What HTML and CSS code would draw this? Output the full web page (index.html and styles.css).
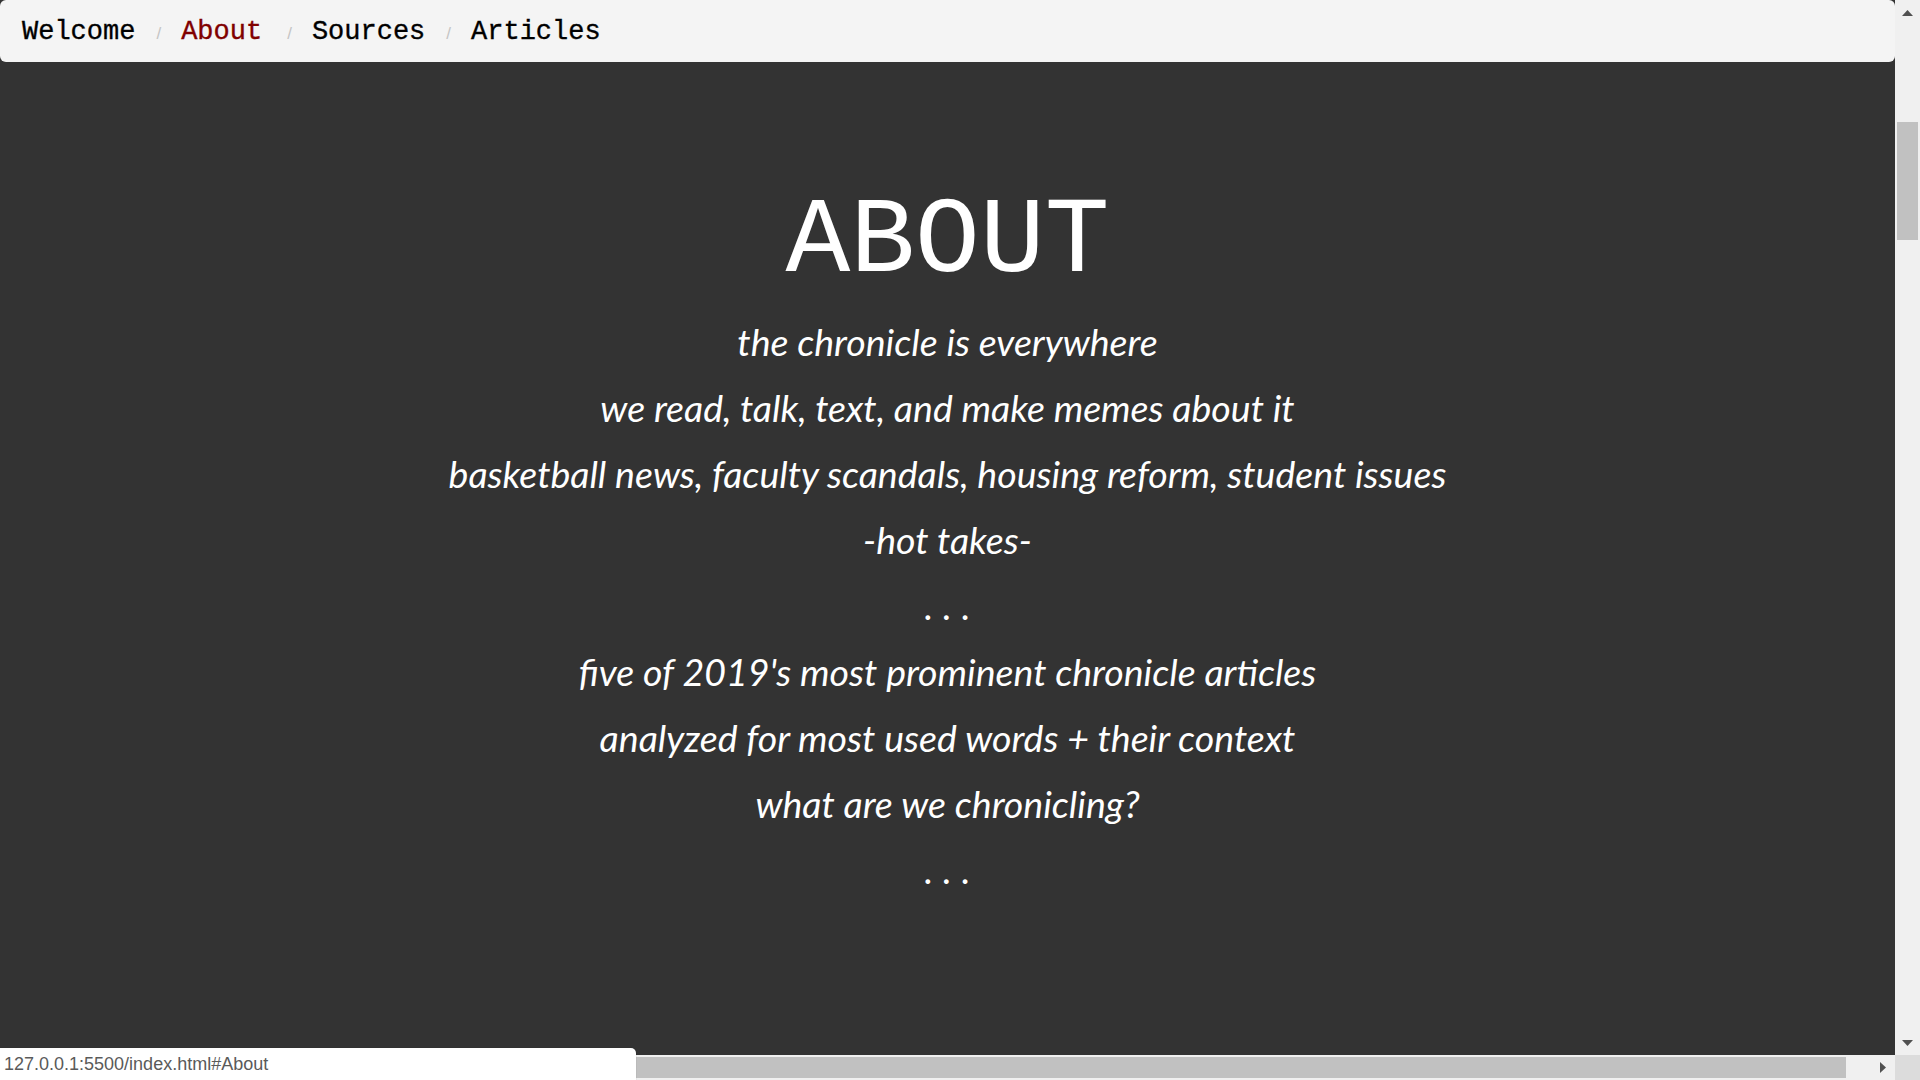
FILE: index.html
```html
<!DOCTYPE html>
<html lang="en">
<head>
<meta charset="utf-8">
<title>About</title>
<link rel="stylesheet" href="styles.css">
</head>
<body>
<div class="window">
  <div class="row-main">
    <div class="viewport">
      <nav class="crumbs">
        <a class="crumb" href="#Welcome">Welcome</a>
        <span class="sep">/</span>
        <a class="crumb active" href="#About">About</a>
        <span class="sep">/</span>
        <a class="crumb" href="#Sources">Sources</a>
        <span class="sep">/</span>
        <a class="crumb" href="#Articles">Articles</a>
      </nav>
      <section class="about" id="About">
        <h1 class="title">ABOUT</h1>
        <p class="line">the chronicle is everywhere</p>
        <p class="line">we read, talk, text, and make memes about it</p>
        <p class="line">basketball news, faculty scandals, housing reform, student issues</p>
        <p class="line">-hot takes-</p>
        <p class="line dots">. . .</p>
        <p class="line">five of 2019's most prominent chronicle articles</p>
        <p class="line">analyzed for most used words + their context</p>
        <p class="line">what are we chronicling?</p>
        <p class="line dots">. . .</p>
      </section>
    </div>
    <div class="vscroll">
      <div class="sb-btn">
        <svg width="11" height="6" viewBox="0 0 11 6"><polygon points="0,6 5.5,0 11,6" fill="#505050"/></svg>
      </div>
      <div class="sb-track-v"><div class="thumb-v"></div></div>
      <div class="sb-btn">
        <svg width="11" height="6" viewBox="0 0 11 6"><polygon points="0,0 11,0 5.5,6" fill="#505050"/></svg>
      </div>
    </div>
  </div>
  <div class="row-h">
    <div class="hscroll">
      <div class="sb-btn">
        <svg width="6" height="11" viewBox="0 0 6 11"><polygon points="6,0 6,11 0,5.5" fill="#505050"/></svg>
      </div>
      <div class="sb-track-h"><div class="thumb-h"></div></div>
      <div class="sb-btn">
        <svg width="6" height="11" viewBox="0 0 6 11"><polygon points="0,0 6,5.5 0,11" fill="#505050"/></svg>
      </div>
    </div>
    <div class="corner"></div>
  </div>
  <div class="status">127.0.0.1:5500/index.html#About</div>
</div>
</body>
</html>
```

FILE: styles.css
```css
* { box-sizing: border-box; }
html, body { margin: 0; padding: 0; }
body { width: 1920px; height: 1080px; overflow: hidden; background: #333333; }

.window {
  position: relative;
  width: 1920px;
  height: 1080px;
  display: flex;
  flex-direction: column;
}

.row-main { flex: 1; display: flex; min-height: 0; }
.viewport { flex: 1; background: #333333; overflow: hidden; }

.crumbs {
  display: flex;
  align-items: baseline;
  height: 62px;
  padding: 17px 0 0 22px;
  background: #f4f4f4;
  border-radius: 6px;
  font-family: "Liberation Mono", "Courier New", monospace;
  font-size: 27px;
  line-height: 31px;
}
.crumb { color: #000; text-decoration: none; -webkit-text-stroke: 0.35px currentColor; }
.crumb.active { color: #800000; margin-right: 4px; }
.sep {
  font-family: "Liberation Sans", Arial, sans-serif;
  font-size: 17px;
  color: #c4c4c4;
  margin: 0 20px 0 21px;
}

.about { text-align: center; color: #fff; }
.title {
  margin: 126px 0 13px;
  font-family: "Liberation Mono", "Courier New", monospace;
  font-weight: normal;
  font-size: 108px;
  line-height: 108px;
}
.line {
  margin: 0;
  font-family: Lato, "Open Sans", sans-serif;
  font-style: italic;
  font-size: 37.5px;
  line-height: 66px;
}
.dots { word-spacing: 1px; }

.vscroll {
  width: 25px;
  background: #f0f0f0;
  display: flex;
  flex-direction: column;
}
.sb-btn {
  width: 25px;
  height: 25px;
  flex: none;
  display: flex;
  align-items: center;
  justify-content: center;
}
.sb-btn svg { display: block; }
.sb-track-v { flex: 1; }
.thumb-v {
  margin: 97px 2px 0;
  height: 118px;
  background: #c1c1c1;
}

.row-h { height: 25px; display: flex; flex: none; }
.hscroll { flex: 1; display: flex; background: #f0f0f0; }
.sb-track-h { flex: 1; display: flex; }
.thumb-h {
  flex: 1;
  margin: 2px 24px 2px 475px;
  background: #c1c1c1;
}
.corner { width: 25px; background: #dcdcdc; }

.status {
  position: absolute;
  left: 0;
  bottom: 0;
  width: 636px;
  height: 32px;
  padding: 5px 0 0 4px;
  background: #ffffff;
  border-top-right-radius: 5px;
  box-shadow: 0 0 1px rgba(0,0,0,0.35);
  font-family: "Liberation Sans", Arial, sans-serif;
  font-size: 18px;
  line-height: 22px;
  color: #5a5a5a;
}
```
